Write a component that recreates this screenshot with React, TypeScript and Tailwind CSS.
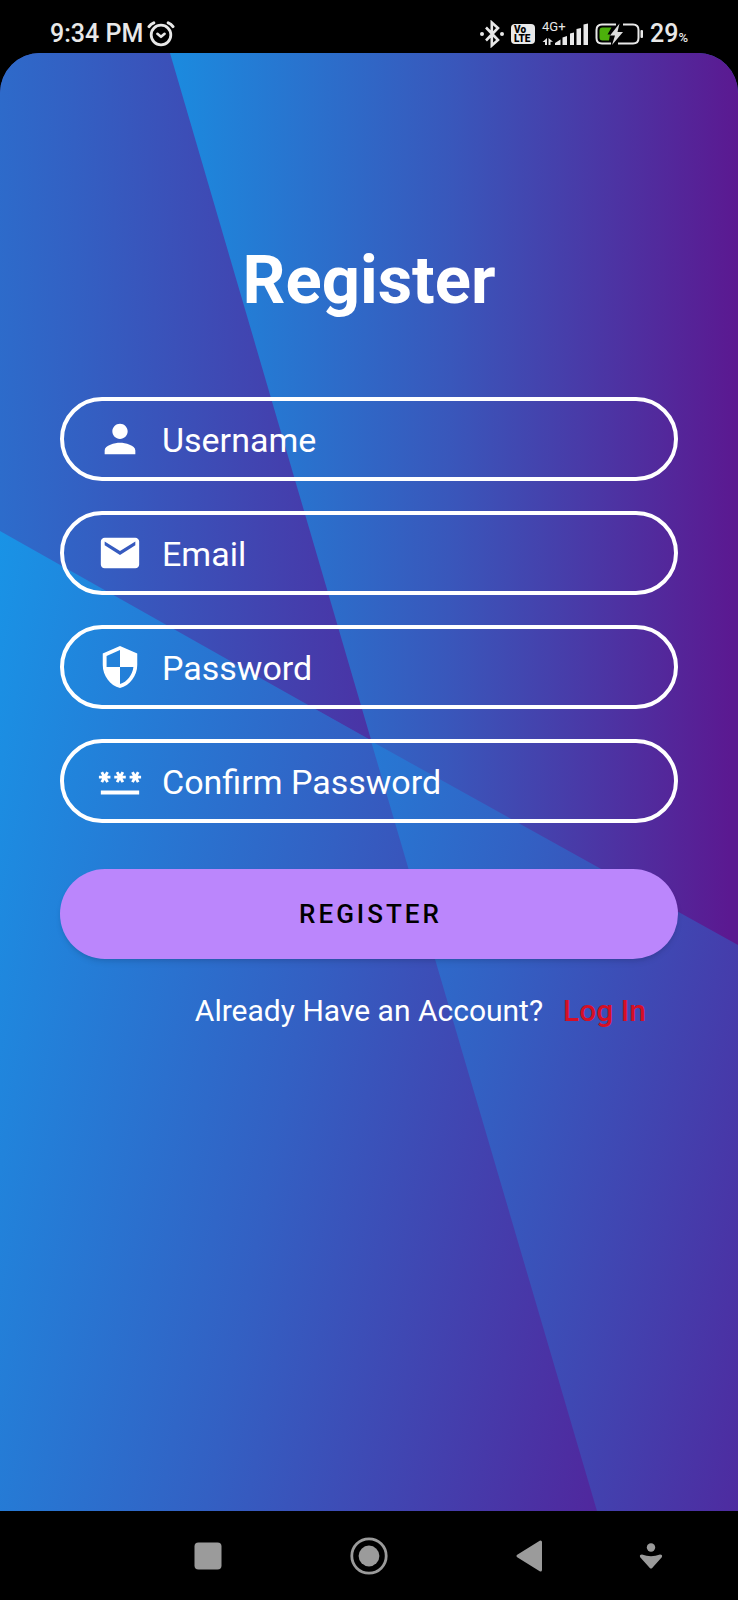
import type { ComponentType } from "react";
import { MdEmail, MdPassword, MdPerson, MdSecurity } from "react-icons/md";

function AlarmIcon() {
  return (
    <svg viewBox="0 0 28 26" className="h-[26px] w-7" fill="none" stroke="#e8e8e8" strokeLinecap="round" strokeLinejoin="round">
      <circle cx="14" cy="14" r="9.8" strokeWidth="2.8" />
      <path d="M10.400 12.800l3.600 3 3.600-3" strokeWidth="2.6" />
      <path d="M2 5.600Q3.800 3 6.800 1.800M26 5.600Q24.200 3 21.200 1.800" strokeWidth="3" />
    </svg>
  );
}

function BluetoothIcon() {
  return (
    <svg viewBox="0 0 24 28" className="h-7 w-6" fill="none" stroke="#e8e8e8" strokeWidth="2.6">
      <path d="M6 7.500l12 12.500-6.200 5.500V2.500L18 8 6 20.500" />
      <circle cx="2" cy="14" r="2" fill="#e8e8e8" stroke="none" />
      <circle cx="22" cy="14" r="2" fill="#e8e8e8" stroke="none" />
    </svg>
  );
}

function SignalIcon() {
  return (
    <svg viewBox="0 0 46 22" className="h-[22px] w-[46px]" fill="#e8e8e8">
      <path d="M5 15v7h-2v-3H0.500zM6.500 22v-7l4.500 3.800H8.500V22z" />
      <path d="M13 22v-2l5.500-3.500V22zM20.500 14.500l4.500-1.500v9h-4.500zM28 10.500l4-1V22h-4zM34.500 6l4.500-1v17h-4.500zM41.500 1.500L46 0.500V22h-4.500z" />
    </svg>
  );
}

function BatteryIcon() {
  return (
    <svg viewBox="0 0 48 22" className="h-[22px] w-12" fill="none">
      <path d="M21 1.500H7Q1.500 1.500 1.500 7v8Q1.500 20.500 7 20.500h9M28 1.500h10Q43.500 1.500 43.500 7v8Q43.500 20.500 38 20.500H23" stroke="#e8e8e8" strokeWidth="2" />
      <path d="M7.500 4.500h9l-4 7h2.500l-1 6H7.500Q4.500 17.500 4.500 14.500v-7Q4.500 4.500 7.500 4.500z" fill="#4cb00b" />
      <path d="M24.500 0.500l-9.500 12h5l-3 9.500 11-13h-5.500z" fill="#dcdcdc" />
      <rect x="45.500" y="7" width="2.500" height="8" rx="1" fill="#e8e8e8" />
    </svg>
  );
}

function StatusBar() {
  return (
    <header className="flex h-[53px] items-end justify-between bg-black px-[50px] pb-[5px] text-[#e8e8e8]">
      <div className="flex items-center gap-1">
        <span className="text-[25px] leading-7 font-medium">9:34 PM</span>
        <AlarmIcon />
      </div>
      <div className="flex items-center gap-[7px]">
        <BluetoothIcon />
        <span className="flex h-5 w-6 flex-col justify-center rounded-sm bg-[#e8e8e8] pl-[3px] text-[10px] leading-[9px] font-black text-black">
          <span>Vo</span>
          <span>LTE</span>
        </span>
        <span className="relative">
          <SignalIcon />
          <span className="absolute -top-0.5 left-0 text-[13px] leading-3">4G+</span>
        </span>
        <BatteryIcon />
        <span className="flex items-baseline text-[25px] leading-7 font-medium">
          29<span className="text-[13px] leading-none">%</span>
        </span>
      </div>
    </header>
  );
}

function BackdropStops() {
  return (
    <>
      <stop offset="0" stopColor="#1993e6" />
      <stop offset="0.5" stopColor="#3360c3" />
      <stop offset="1" stopColor="#50279d" />
    </>
  );
}

function Backdrop() {
  return (
    <svg
      viewBox="0 0 738 1458"
      preserveAspectRatio="none"
      className="absolute inset-0 -z-10 h-full w-full"
      aria-hidden="true"
    >
      <defs>
        <linearGradient id="north-west" gradientUnits="userSpaceOnUse" x1="-284" y1="0" x2="427" y2="-20">
          <BackdropStops />
        </linearGradient>
        <linearGradient id="north-east" gradientUnits="userSpaceOnUse" x1="170" y1="0" x2="738" y2="6">
          <stop offset="0" stopColor="#1b8bdf" />
          <stop offset="0.5" stopColor="#3957bb" />
          <stop offset="1" stopColor="#5b1991" />
        </linearGradient>
        <linearGradient id="south-west" gradientUnits="userSpaceOnUse" x1="0" y1="481" x2="759" y2="628">
          <BackdropStops />
        </linearGradient>
        <linearGradient id="south-east" gradientUnits="userSpaceOnUse" x1="186" y1="649" x2="898" y2="792">
          <BackdropStops />
        </linearGradient>
      </defs>
      <rect width="738" height="1458" fill="#3957bb" />
      <path d="M0 0H171L374 689 0 480z" fill="url(#north-west)" />
      <path d="M170 0H738V893L372 690z" fill="url(#north-east)" />
      <path d="M0 478L372 688 598 1458H0z" fill="url(#south-west)" />
      <path d="M371 688L738 892V1458H597z" fill="url(#south-east)" />
    </svg>
  );
}

type FieldProps = {
  id: string;
  label: string;
  type: string;
  icon: ComponentType<{ className?: string }>;
};

const fields: FieldProps[] = [
  { id: "username", label: "Username", type: "text", icon: MdPerson },
  { id: "email", label: "Email", type: "email", icon: MdEmail },
  { id: "password", label: "Password", type: "password", icon: MdSecurity },
  { id: "confirm-password", label: "Confirm Password", type: "password", icon: MdPassword },
];

function Field({ id, label, type, icon: Icon }: FieldProps) {
  return (
    <label
      htmlFor={id}
      className="flex h-[84px] items-center gap-[19px] rounded-full border-4 border-white px-[33px] text-white"
    >
      <Icon className="size-[46px] shrink-0" />
      <input
        id={id}
        name={id}
        type={type}
        placeholder={label}
        aria-label={label}
        className="min-w-0 flex-1 bg-transparent pt-0.5 text-[34px] leading-10 outline-none placeholder:text-white"
      />
    </label>
  );
}

function RegisterForm() {
  return (
    <form className="flex flex-col px-[60px] pt-[187px]" onSubmit={(e) => e.preventDefault()}>
      <h1 className="text-center text-[67px] leading-20 font-bold text-white">Register</h1>
      <div className="mt-[77px] flex flex-col gap-[30px]">
        {fields.map((field) => (
          <Field key={field.id} {...field} />
        ))}
      </div>
      <button
        type="submit"
        className="mt-[46px] h-[90px] rounded-full bg-[#bb86fc] pl-[3px] text-[26px] font-medium tracking-[3px] text-black shadow-md"
      >
        REGISTER
      </button>
      <p className="mt-[34px] flex justify-end gap-5 pr-8 text-[30px] leading-9 text-white">
        Already Have an Account?
        <a href="#login" className="font-medium text-[#d50f26]">
          Log In
        </a>
      </p>
    </form>
  );
}

function NavigationBar() {
  return (
    <nav className="grid h-[89px] grid-cols-[1fr_161px_161px_161px_1fr] items-center bg-black text-[#9b9b9b]">
      <button type="button" aria-label="Recent apps" className="col-start-2 flex justify-center">
        <svg viewBox="0 0 28 28" className="size-7" fill="currentColor">
          <rect x="0.500" y="0.500" width="27" height="27" rx="4" />
        </svg>
      </button>
      <button type="button" aria-label="Home" className="flex justify-center">
        <svg viewBox="0 0 38 38" className="size-[38px]" fill="currentColor">
          <circle cx="19" cy="19" r="17.200" fill="none" stroke="currentColor" strokeWidth="2.800" />
          <circle cx="19" cy="19" r="10.400" />
        </svg>
      </button>
      <button type="button" aria-label="Back" className="flex justify-center">
        <svg viewBox="0 0 28 34" className="h-[34px] w-7" fill="currentColor" stroke="currentColor" strokeWidth="3" strokeLinejoin="round">
          <path d="M2 17L24.500 3v28z" />
        </svg>
      </button>
      <button type="button" aria-label="Hide navigation bar" className="flex justify-start pl-7">
        <svg viewBox="0 0 24 28" className="h-7 w-6" fill="currentColor">
          <circle cx="12" cy="5.500" r="4.200" />
          <path d="M3 12.500Q12 16 21 12.500q3 0 1.800 2.800L13.200 26q-1.200 1-2.400 0L1.200 15.300q-1.200-2.800 1.800-2.800z" />
        </svg>
      </button>
    </nav>
  );
}

export default function App() {
  return (
    <div className="flex min-h-screen flex-col bg-black font-['Roboto',sans-serif]">
      <StatusBar />
      <main className="relative isolate flex-1 overflow-hidden rounded-t-[40px]">
        <Backdrop />
        <RegisterForm />
      </main>
      <NavigationBar />
    </div>
  );
}
